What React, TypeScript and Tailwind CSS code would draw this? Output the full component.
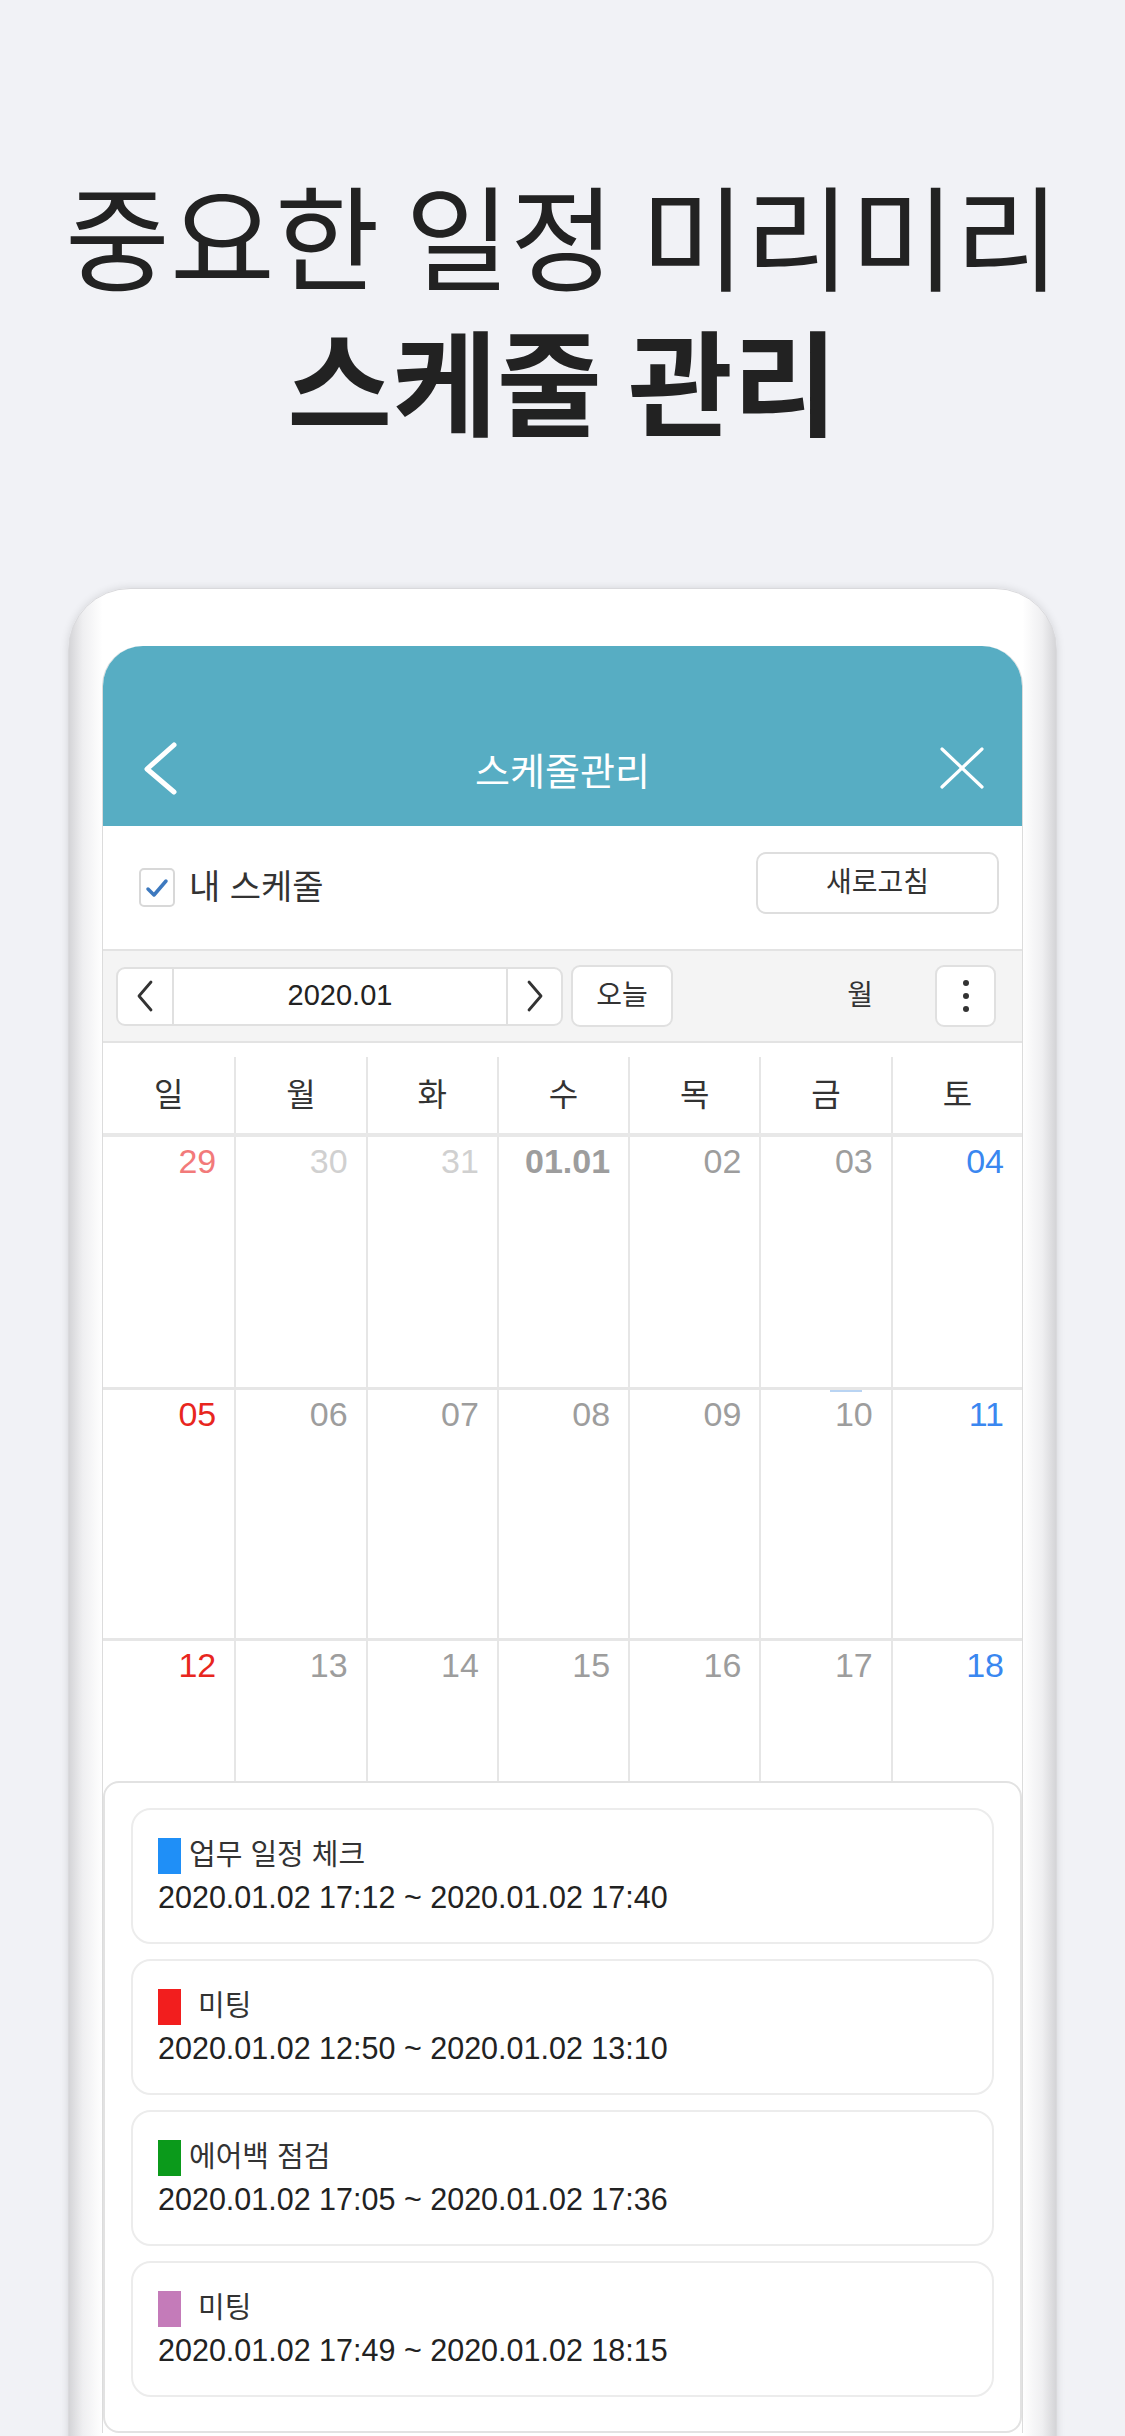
import { Fragment } from 'react';

type DayCell = {
  label: string;
  color: string;
  bold?: boolean;
  mark?: boolean;
};

type Schedule = {
  title: string;
  range: string;
  color: string;
  spaced?: boolean;
};

const dayNames = ['일', '월', '화', '수', '목', '금', '토'];

const gray = 'text-[#9d9d9d]';
const sun = 'text-[#e8261e]';
const sat = 'text-[#3a87f0]';

const weeks: { height: string; cells: DayCell[] }[] = [
  {
    height: 'h-[253px] border-b-[3px]',
    cells: [
      { label: '29', color: 'text-[#f27a7a]' },
      { label: '30', color: 'text-[#d0d0d0]' },
      { label: '31', color: 'text-[#d0d0d0]' },
      { label: '01.01', color: 'text-[#9d9d9d]', bold: true },
      { label: '02', color: gray },
      { label: '03', color: gray },
      { label: '04', color: sat },
    ],
  },
  {
    height: 'h-[251px] border-b-[3px]',
    cells: [
      { label: '05', color: sun },
      { label: '06', color: gray },
      { label: '07', color: gray },
      { label: '08', color: gray },
      { label: '09', color: gray },
      { label: '10', color: gray, mark: true },
      { label: '11', color: sat },
    ],
  },
  {
    height: 'h-[140px]',
    cells: [
      { label: '12', color: sun },
      { label: '13', color: gray },
      { label: '14', color: gray },
      { label: '15', color: gray },
      { label: '16', color: gray },
      { label: '17', color: gray },
      { label: '18', color: sat },
    ],
  },
];

const schedules: Schedule[] = [
  { title: '업무 일정 체크', range: '2020.01.02 17:12 ~ 2020.01.02 17:40', color: 'bg-[#1f8ff7]' },
  { title: '미팅', range: '2020.01.02 12:50 ~ 2020.01.02 13:10', color: 'bg-[#f21e1e]', spaced: true },
  { title: '에어백 점검', range: '2020.01.02 17:05 ~ 2020.01.02 17:36', color: 'bg-[#0b9a1b]' },
  { title: '미팅', range: '2020.01.02 17:49 ~ 2020.01.02 18:15', color: 'bg-[#c47bb9]', spaced: true },
];

function ScheduleCard({ item }: { item: Schedule }) {
  return (
    <div className="h-[136px] rounded-[20px] border-2 border-[#ececec] bg-white px-[25px] pt-[28px]">
      <div className="flex h-[36px] items-center">
        <span className={`h-[36px] w-[23px] shrink-0 ${item.color}`} />
        <span className={`text-[29px] text-[#333] whitespace-pre ${item.spaced ? 'ml-[17px]' : 'ml-[8px]'}`}>
          {item.title}
        </span>
      </div>
      <p className="mt-[5px] text-[30.5px] leading-[36px] text-[#222]">{item.range}</p>
    </div>
  );
}

export default function App() {
  return (
    <div className="h-[2436px] w-[1125px] overflow-hidden bg-[#f1f2f6] [font-family:'Liberation_Sans','Noto_Sans_CJK_KR',sans-serif]">
      {/* headline */}
      <div className="pt-[160px] text-center text-[114px] leading-[145px] text-[#222] [font-family:'Noto_Sans_CJK_KR',sans-serif]">
        <p className="font-normal">중요한 일정 미리미리</p>
        <p className="font-bold">스케줄 관리</p>
      </div>

      {/* phone frame */}
      <div className="ml-[68px] mt-[138px] w-[989px] rounded-t-[62px] border border-[#d9d9dc] bg-[linear-gradient(90deg,#d4d4d7_0%,#efeff1_1.4%,#fff_3.4%,#fff_96.6%,#efeff1_98.6%,#d4d4d7_100%)] px-[33px] pb-[40px] pt-[57px] shadow-[0_0_8px_rgba(0,0,0,0.12)]">
        <div className="rounded-t-[40px] border-x border-[#dcdcdc] bg-white">
          {/* title bar */}
          <div className="flex h-[180px] items-end rounded-t-[40px] bg-[#57adc3]">
            <div className="grid h-[116px] w-full grid-cols-[1fr_auto_1fr] items-center px-[38px]">
              <svg width="36" height="54" viewBox="0 0 36 54" fill="none" stroke="white" strokeWidth="5" strokeLinecap="round" strokeLinejoin="round">
                <polyline points="33,4 6,28 33,51" />
              </svg>
              <span className="text-[38px] text-white [font-family:'Noto_Sans_CJK_KR',sans-serif]">스케줄관리</span>
              <svg className="justify-self-end" width="44" height="42" viewBox="0 0 44 42" fill="none" stroke="white" strokeWidth="3.2" strokeLinecap="round">
                <line x1="2" y1="2" x2="42" y2="40" />
                <line x1="42" y1="2" x2="2" y2="40" />
              </svg>
            </div>
          </div>

          {/* my schedule row */}
          <div className="flex h-[123px] items-center justify-between pl-[36px] pr-[23px]">
            <label className="flex items-center">
              <span className="flex h-[39px] w-[36px] items-center justify-center rounded-[5px] border-2 border-[#d8d8d8] bg-white">
                <svg width="24" height="20" viewBox="0 0 24 20" fill="none" stroke="#3d79bf" strokeWidth="3.5" strokeLinecap="round" strokeLinejoin="round">
                  <polyline points="3,11 9,17 21,3" />
                </svg>
              </span>
              <span className="ml-[14px] text-[34px] text-[#333]">내 스케줄</span>
            </label>
            <button className="mb-[10px] h-[62px] w-[243px] rounded-[10px] border-2 border-[#dedede] bg-white text-[28px] text-[#333]">
              새로고침
            </button>
          </div>

          {/* toolbar */}
          <div className="flex h-[94px] items-center border-y-2 border-[#e3e3e3] bg-[#f4f4f4] pl-[13px] pr-[26px]">
            <div className="flex h-[59px] w-[447px] rounded-[9px] border-2 border-[#e0e0e0] bg-white">
              <div className="flex w-[56px] items-center justify-center border-r-2 border-[#e0e0e0]">
                <svg width="18" height="32" viewBox="0 0 18 32" fill="none" stroke="#333" strokeWidth="2.8" strokeLinecap="round" strokeLinejoin="round">
                  <polyline points="15,2 3,16 15,30" />
                </svg>
              </div>
              <div className="flex flex-1 items-center justify-center text-[29px] text-[#222]">2020.01</div>
              <div className="flex w-[55px] items-center justify-center border-l-2 border-[#e0e0e0]">
                <svg width="18" height="32" viewBox="0 0 18 32" fill="none" stroke="#333" strokeWidth="2.8" strokeLinecap="round" strokeLinejoin="round">
                  <polyline points="3,2 15,16 3,30" />
                </svg>
              </div>
            </div>
            <button className="ml-[8px] h-[62px] w-[102px] rounded-[9px] border-2 border-[#e0e0e0] bg-white text-[28px] text-[#333]">
              오늘
            </button>
            <span className="ml-auto mr-[62px] text-[28px] text-[#333]">월</span>
            <button className="flex h-[62px] w-[61px] flex-col items-center justify-center gap-[7px] rounded-[9px] border-2 border-[#e0e0e0] bg-white">
              <span className="h-[6px] w-[6px] rounded-full bg-[#333]" />
              <span className="h-[6px] w-[6px] rounded-full bg-[#333]" />
              <span className="h-[6px] w-[6px] rounded-full bg-[#333]" />
            </button>
          </div>

          {/* week day header */}
          <div className="border-b-4 border-[#e8e8e8] pt-[14px]">
            <div className="grid grid-cols-7">
              {dayNames.map((d, i) => (
                <div
                  key={d}
                  className={`flex h-[76px] items-center justify-center text-[32px] text-[#333] ${i > 0 ? 'border-l-2 border-[#e6e6e6]' : ''}`}
                >
                  {d}
                </div>
              ))}
            </div>
          </div>

          {/* weeks */}
          {weeks.map((week, wi) => (
            <Fragment key={wi}>
              <div className={`grid grid-cols-7 border-[#e6e6e6] ${week.height}`}>
                {week.cells.map((c, i) => (
                  <div
                    key={c.label}
                    className={`relative pr-[18px] pt-[4px] text-right text-[34px] leading-[40px] ${c.color} ${c.bold ? 'font-bold' : ''} ${i > 0 ? 'border-l-2 border-[#e6e6e6]' : ''}`}
                  >
                    {c.mark && <span className="absolute right-[29px] top-0 h-[2px] w-[32px] bg-[#b9d4f3]" />}
                    {c.label}
                  </div>
                ))}
              </div>
            </Fragment>
          ))}

          {/* schedule list */}
          <div className="flex flex-col gap-[15px] rounded-[16px] border-2 border-[#e2e2e2] bg-white px-[26px] pb-[34px] pt-[25px]">
            {schedules.map((s, i) => (
              <ScheduleCard key={i} item={s} />
            ))}
          </div>
        </div>
      </div>
    </div>
  );
}
